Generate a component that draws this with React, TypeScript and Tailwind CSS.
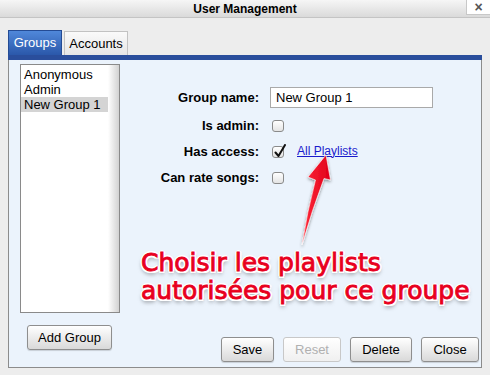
import React from 'react';

const Btn: React.FC<{ label: string; w: string; disabled?: boolean }> = ({ label, w, disabled }) => (
    <button
        className={`${w} h-[25px] rounded-[3px] border text-[13px] bg-gradient-to-b ${
            disabled
                ? 'border-[#c8c8c8] from-white to-[#f0f0f0] text-[#b0b0b0]'
                : 'border-[#8e8e8e] from-white to-[#d9d9d9] text-black shadow-[0_1px_1px_rgba(0,0,0,0.15)]'
        }`}
    >
        {label}
    </button>
);

const Check: React.FC<{ checked?: boolean }> = ({ checked }) => (
    <span className="relative w-[12px] h-[12px] rounded-[3px] border border-[#8a8a8a] bg-gradient-to-b from-white to-[#e4e4e4] shrink-0">
        {checked && (
            <svg className="absolute left-[1px] -top-[3px]" width="13" height="14" viewBox="0 0 13 14">
                <path d="M1.5 8.5 L4.5 12 L11 1" fill="none" stroke="#111" strokeWidth="2" strokeLinecap="round" strokeLinejoin="round" />
            </svg>
        )}
    </span>
);

const App: React.FC = () => {
    return (
        <div className="relative w-[490px] h-[375px] bg-[#ededed] overflow-hidden font-['Liberation_Sans',Arial,sans-serif] text-black">
            {/* Title bar */}
            <div className="relative h-[18px] bg-gradient-to-b from-[#f6f6f6] to-[#dadada] border-b border-[#c4c4c4] flex items-center justify-center">
                <span className="text-[12px] font-bold leading-none">User Management</span>
                <div className="absolute right-0 top-0 w-[24px] h-[15px] bg-white border-l border-b border-[#c8c8c8] flex items-center justify-center text-[#555] text-[14px] leading-none font-bold">
                    ×
                </div>
            </div>

            {/* Tabs */}
            <div className="flex items-end pl-[8px] pt-[12px] gap-[2px]">
                <div className="w-[54px] h-[25px] flex items-center justify-center text-[13px] text-white bg-gradient-to-b from-[#5088da] to-[#2b58aa] border border-[#244b94] border-b-0">
                    Groups
                </div>
                <div className="w-[64px] h-[24px] flex items-center justify-center text-[13px] bg-gradient-to-b from-[#fafafa] to-[#e6e6e6] border border-[#c2c2c2] border-b-0">
                    Accounts
                </div>
            </div>

            {/* Panel */}
            <div className="mx-[8px] w-[474px]">
                <div className="h-[5px] bg-[#2a4e9c]" />
                <div className="relative h-[308px] bg-[#ebf3fc] border border-t-0 border-[#8c8c8c] flex">
                    {/* Left column */}
                    <div className="flex flex-col pl-[11px] pt-[4px]">
                        <div className="relative w-[100px] h-[249px] bg-white border border-[#8a8a8a] text-[13px] leading-[15px] pt-[2px]">
                            <div className="absolute right-0 top-0 bottom-0 w-[11px] bg-gradient-to-r from-white to-[#d2d2d2]" />
                            <div className="pl-[3px]">Anonymous</div>
                            <div className="pl-[3px]">Admin</div>
                            <div className="pl-[3px] w-[87px] bg-[#d4d4d4]">New Group 1</div>
                        </div>
                        <div className="pl-[7px] mt-[12px]">
                            <Btn label="Add Group" w="w-[85px]" />
                        </div>
                    </div>

                    {/* Right column */}
                    <div className="flex-1 flex flex-col">
                        <div className="grid grid-cols-[109px_auto] gap-x-[11px] pl-[30px] pt-[27px] text-[13px] font-bold">
                            <div className="h-[21px] flex items-center justify-end">Group name:</div>
                            <div className="h-[21px]">
                                <div className="w-[163px] h-[21px] bg-white border border-[#a9a9a9] flex items-center pl-[5px] text-[13px] font-normal">
                                    New Group 1
                                </div>
                            </div>
                            <div className="mt-[5px] h-[26px] flex items-center justify-end">Is admin:</div>
                            <div className="mt-[5px] h-[26px] flex items-center pl-[2px]">
                                <Check />
                            </div>
                            <div className="h-[26px] flex items-center justify-end">Has access:</div>
                            <div className="h-[26px] flex items-center pl-[2px]">
                                <Check checked />
                                <span className="ml-[13px] -mt-[3px] text-[12px] font-normal text-[#1a1acc] underline">All Playlists</span>
                            </div>
                            <div className="h-[26px] flex items-center justify-end">Can rate songs:</div>
                            <div className="h-[26px] flex items-center pl-[2px]">
                                <Check />
                            </div>
                        </div>

                        <div className="ml-[21px] mt-[58px] font-['DejaVu_Sans',Verdana,sans-serif] text-[25px] leading-[28px] font-normal text-[#e8001e] [-webkit-text-stroke:0.9px_#e8001e] [text-shadow:1.5px_1.5px_0_#fff,-1.5px_-1.5px_0_#fff,1.5px_-1.5px_0_#fff,-1.5px_1.5px_0_#fff,0_2px_0_#fff,2px_0_0_#fff,-2px_0_0_#fff,0_-2px_0_#fff,0_2.5px_4px_rgba(0,0,0,0.55)]">
                            <div>Choisir les playlists</div>
                            <div>autorisées pour ce groupe</div>
                        </div>

                        <div className="mt-auto mb-[5px] flex justify-end gap-[9px] pr-[2px]">
                            <Btn label="Save" w="w-[53px]" />
                            <Btn label="Reset" w="w-[58px]" disabled />
                            <Btn label="Delete" w="w-[62px]" />
                            <Btn label="Close" w="w-[58px]" />
                        </div>
                    </div>
                </div>
            </div>

            {/* Annotation arrow */}
            <svg className="absolute left-0 top-0 pointer-events-none" width="490" height="375" viewBox="0 0 490 375">
                <defs>
                    <linearGradient id="arr" x1="0" y1="0" x2="1" y2="0">
                        <stop offset="0" stopColor="#ff2a3a" />
                        <stop offset="1" stopColor="#e0001a" />
                    </linearGradient>
                    <filter id="sh" x="-50%" y="-20%" width="200%" height="140%">
                        <feDropShadow dx="0" dy="1.5" stdDeviation="1.5" floodColor="#000" floodOpacity="0.45" />
                    </filter>
                </defs>
                <path
                    d="M326 155 L330.5 180 L324 178.5 Q312 210 302 245 Q307 212 315.5 180 L308 177 Z"
                    fill="url(#arr)"
                    stroke="#fff"
                    strokeWidth="0.6"
                    filter="url(#sh)"
                />
            </svg>
        </div>
    );
};

export default App;
